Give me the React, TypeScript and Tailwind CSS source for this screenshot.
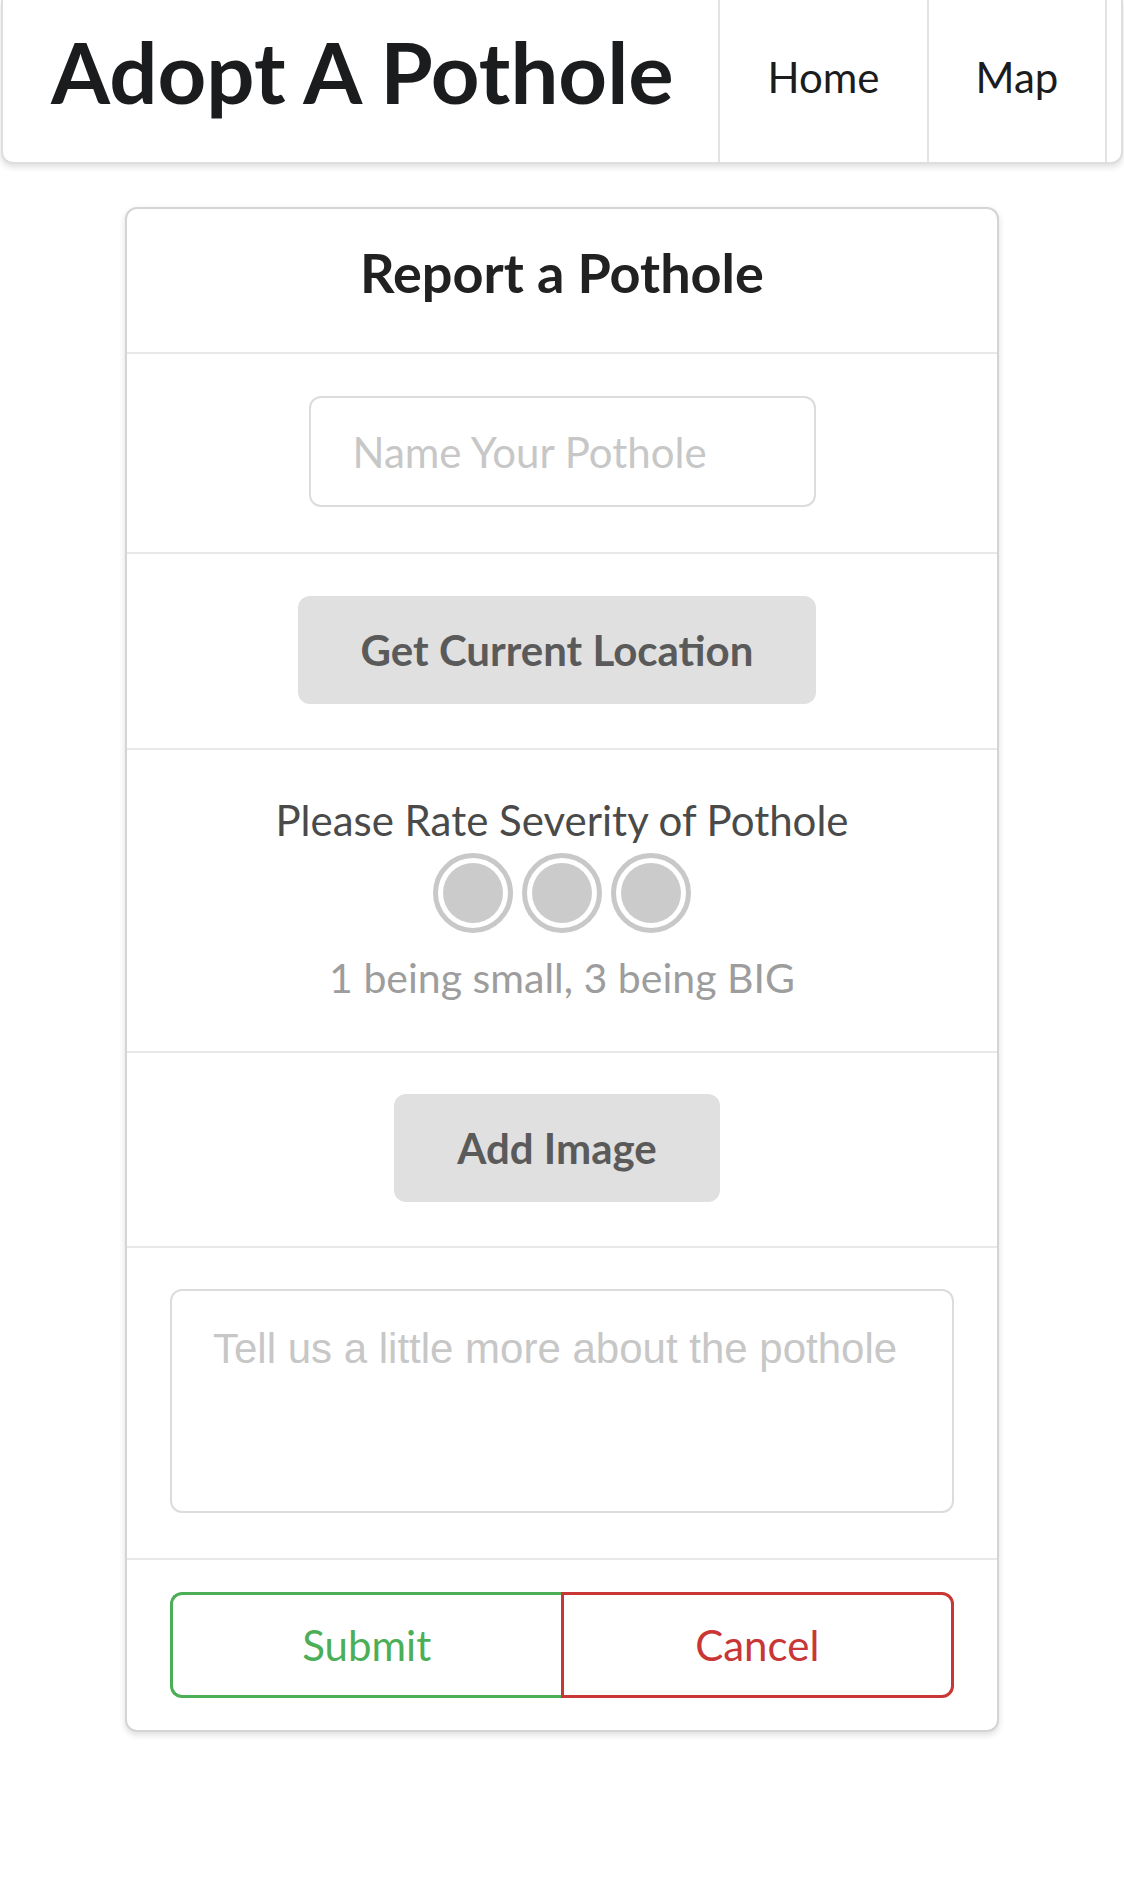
import React from "react";

function Circle() {
  return (
    <div className="h-[80px] w-[80px] rounded-full border-[5px] border-[#c8c8c8] p-[5px]">
      <div className="h-full w-full rounded-full bg-[#cbcbcb]" />
    </div>
  );
}

export default function App() {
  return (
    <div className="min-h-[1888px] bg-white font-[Lato,sans-serif]">
      <header className="mx-px flex h-[164px] rounded-b-[12px] border-x-2 border-b-2 border-[#dedede] bg-white shadow-[0_3px_6px_rgba(34,36,38,0.15)]">
        <div className="flex flex-1 items-center pb-[20px] pl-[48px] text-[85px] font-bold leading-none text-[#1b1c1d]">
          Adopt A Pothole
        </div>
        <div className="flex w-[209px] items-center justify-center border-l-2 border-[#e3e3e3] pb-[9px] text-[42px] leading-none text-[#1b1c1d]">
          Home
        </div>
        <div className="flex w-[178px] items-center justify-center border-l-2 border-[#e3e3e3] pb-[9px] text-[42px] leading-none text-[#1b1c1d]">
          Map
        </div>
        <div className="w-[16px] border-l-2 border-[#e3e3e3]" />
      </header>

      <div className="mx-auto mt-[43px] w-[874px] rounded-[12px] border-2 border-[#d4d4d5] bg-white shadow-[0_3px_6px_rgba(34,36,38,0.15)]">
        <div className="pb-[47px] pt-[32px] text-center text-[54px] font-bold leading-[64px] text-[#212121]">
          Report a Pothole
        </div>

        <div className="flex justify-center border-t-2 border-[#e8e8e8] pb-[45px] pt-[42px]">
          <input
            type="text"
            placeholder="Name Your Pothole"
            className="h-[111px] w-[507px] rounded-[12px] border-2 border-[#dcdcdc] px-[42px] text-[42px] text-[#212121] outline-none placeholder:text-[#c7c7c7]"
          />
        </div>

        <div className="flex justify-center border-t-2 border-[#e8e8e8] pb-[44px] pt-[42px]">
          <button className="mr-[10px] h-[108px] rounded-[12px] bg-[#e0e0e0] px-[63px] text-[42px] font-bold leading-none text-[#5a5a5a]">
            Get Current Location
          </button>
        </div>

        <div className="flex flex-col items-center border-t-2 border-[#e8e8e8] pb-[49px] pt-[46px]">
          <div className="text-[42px] leading-[48px] text-[#4a4a4a]">Please Rate Severity of Pothole</div>
          <div className="mt-[9px] flex gap-[9px]">
            <Circle />
            <Circle />
            <Circle />
          </div>
          <div className="mt-[21px] text-[41px] leading-[48px] text-[#9d9d9d]">1 being small, 3 being BIG</div>
        </div>

        <div className="flex justify-center border-t-2 border-[#e8e8e8] pb-[44px] pt-[41px]">
          <button className="mr-[10px] h-[108px] rounded-[12px] bg-[#e0e0e0] px-[63px] text-[42px] font-bold leading-none text-[#5a5a5a]">
            Add Image
          </button>
        </div>

        <div className="flex justify-center border-t-2 border-[#e8e8e8] pb-[45px] pt-[41px]">
          <textarea
            placeholder="Tell us a little more about the pothole"
            className="h-[224px] w-[784px] resize-none rounded-[12px] border-2 border-[#dcdcdc] px-[41px] pt-[31px] font-['Liberation_Sans',Arial,sans-serif] text-[42px] leading-[54px] text-[#212121] outline-none placeholder:text-[#c7c7c7]"
          />
        </div>

        <div className="flex justify-center border-t-2 border-[#e8e8e8] pb-[32px] pt-[32px]">
          <div className="flex w-[784px]">
            <button className="h-[106px] flex-1 rounded-l-[12px] border-[3px] border-r-0 border-[#4caf58] bg-white text-[42px] leading-none text-[#4caf58]">
              Submit
            </button>
            <button className="h-[106px] flex-1 rounded-r-[12px] border-[3px] border-[#c93636] bg-white text-[42px] leading-none text-[#c93636]">
              Cancel
            </button>
          </div>
        </div>
      </div>
    </div>
  );
}
